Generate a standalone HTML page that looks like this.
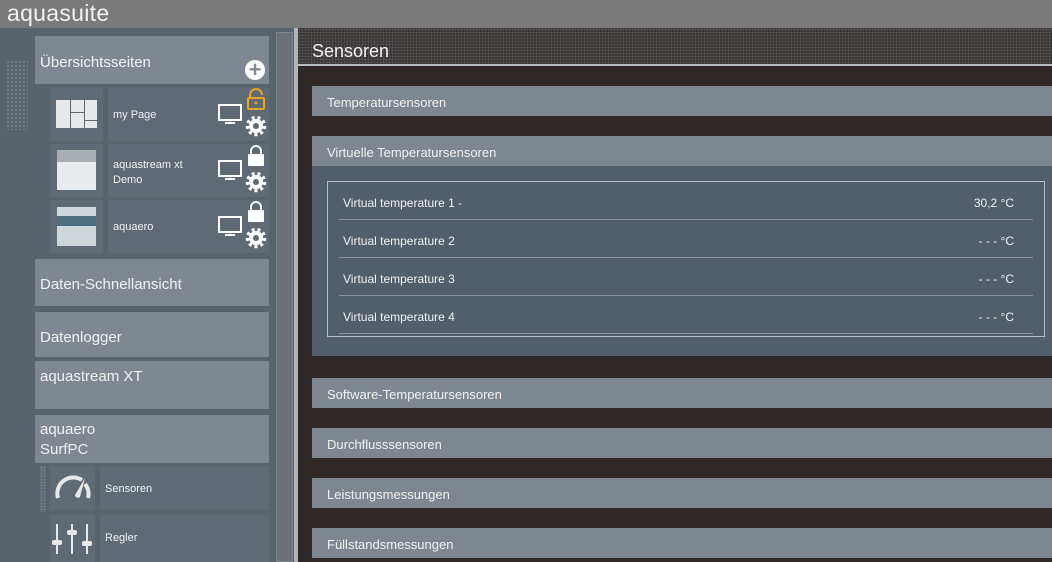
<!DOCTYPE html><html><head><style>
*{margin:0;padding:0;box-sizing:border-box}
body{width:1052px;height:562px;overflow:hidden;background:#2f2827;font-family:"Liberation Sans",sans-serif;color:#f2f2f2;position:relative}
.a{position:absolute}
.hd{background:#7f8891}
.it{background:#5f6a74}
.bar{position:absolute;left:312px;width:740px;height:30px;background:#7e868f;font-size:13px;line-height:33px;padding-left:15px}
.row{position:absolute;left:339px;width:694px;height:38px;border-bottom:1px solid #8b939b;font-size:12px;line-height:42px;padding-left:4px}
.row span{position:absolute;right:19px}
</style></head><body>
<div class="a" style="left:0;top:0;width:1052px;height:28px;background:#7a7a7a;font-size:23px;line-height:26px;padding-left:7px;letter-spacing:0.3px">aquasuite</div>
<div class="a" style="left:0;top:28px;width:294px;height:534px;background:#59636c"></div>
<div class="a" style="left:6px;top:60px;width:22px;height:70px;background-image:radial-gradient(#7c858e 1px,transparent 1.2px);background-size:4px 4px;opacity:.8"></div>
<div class="a" style="left:276px;top:32px;width:17px;height:530px;background:#6b7176;border:1px solid #7e858b"></div>
<div class="a" style="left:294px;top:28px;width:4px;height:534px;background:#aeb4b8"></div>
<div class="a hd" style="left:35px;top:36px;width:234px;height:48px;font-size:15px;padding:18px 0 0 5px">Übersichtsseiten</div>
<div class="a" style="left:245px;top:60px;width:20px;height:20px;border-radius:50%;background:#fff;color:#7f8891;font-size:22px;font-weight:bold;line-height:20px;text-align:center">+</div>

<div class="a it" style="left:50px;top:88px;width:53px;height:53px"></div>
<div class="a" style="left:56px;top:100px;width:14px;height:28px;background:#e8e9ea"></div>
<div class="a" style="left:71px;top:100px;width:13px;height:12px;background:#e8e9ea"></div>
<div class="a" style="left:71px;top:113px;width:13px;height:15px;background:#e8e9ea"></div>
<div class="a" style="left:85px;top:100px;width:12px;height:20px;background:#e8e9ea"></div>
<div class="a" style="left:85px;top:121px;width:12px;height:7px;background:#e8e9ea"></div>
<div class="a it" style="left:108px;top:88px;width:161px;height:53px;font-size:11px;padding:21px 0 0 5px">my Page</div>

<div class="a it" style="left:50px;top:144px;width:53px;height:53px"></div>
<div class="a" style="left:57px;top:150px;width:39px;height:40px;background:#e9ecee;border-top:12px solid #a9aeb2"></div>
<div class="a it" style="left:108px;top:144px;width:161px;height:53px;font-size:11px;padding:14px 0 0 5px;line-height:15px">aquastream xt<br>Demo</div>

<div class="a it" style="left:50px;top:200px;width:53px;height:53px"></div>
<div class="a" style="left:57px;top:207px;width:39px;height:39px;background:#cfd6da"></div>
<div class="a" style="left:57px;top:216px;width:39px;height:10px;background:#4c6e7e"></div>
<div class="a it" style="left:108px;top:200px;width:161px;height:53px;font-size:11px;padding:21px 0 0 5px">aquaero</div>

<svg class="a" style="left:216px;top:88px" width="54" height="166" viewBox="0 0 54 166">
<g fill="none" stroke="#fff" stroke-width="2">
<rect x="3" y="17" width="22" height="15"/><rect x="3" y="73" width="22" height="15"/><rect x="3" y="129" width="22" height="15"/>
<path d="M9 35h10M9 91h10M9 147h10"/>
<path d="M34 11v-4a6 6 0 0 1 12 0" stroke="#e5a526"/>
<path d="M35 67v-4a5 5 0 0 1 10 0v4M35 123v-4a5 5 0 0 1 10 0v4"/>
</g>
<rect x="32" y="10" width="16" height="11" rx="1" fill="none" stroke="#e5a526" stroke-width="2"/>
<circle cx="40" cy="15" r="1.5" fill="#e5a526"/>
<rect x="32" y="66" width="16" height="12" rx="1" fill="#fff"/><rect x="32" y="122" width="16" height="12" rx="1" fill="#fff"/>
<g fill="#fff"><circle cx="40" cy="38" r="7"/><circle cx="40" cy="94" r="7"/><circle cx="40" cy="150" r="7"/></g>
<g stroke="#fff" stroke-width="3.5" stroke-dasharray="3 2.9"><circle cx="40" cy="38" r="8.5" fill="none"/><circle cx="40" cy="94" r="8.5" fill="none"/><circle cx="40" cy="150" r="8.5" fill="none"/></g>
<g fill="#5f6a74"><circle cx="40" cy="38" r="3"/><circle cx="40" cy="94" r="3"/><circle cx="40" cy="150" r="3"/></g>
</svg>

<div class="a hd" style="left:35px;top:259px;width:234px;height:47px;font-size:15px;padding:17px 0 0 5px">Daten-Schnellansicht</div>
<div class="a hd" style="left:35px;top:312px;width:234px;height:45px;font-size:15px;padding:17px 0 0 5px">Datenlogger</div>
<div class="a hd" style="left:35px;top:361px;width:234px;height:48px;font-size:15px;padding:7px 0 0 5px">aquastream XT</div>
<div class="a hd" style="left:35px;top:415px;width:234px;height:48px;font-size:15px;padding:5px 0 0 5px;line-height:20px">aquaero<br>SurfPC</div>
<div class="a" style="left:40px;top:466px;width:6px;height:46px;background-image:radial-gradient(#7c858e 1px,transparent 1.2px);background-size:3px 3px"></div>
<div class="a it" style="left:50px;top:466px;width:45px;height:44px"></div>
<div class="a it" style="left:100px;top:466px;width:169px;height:44px;font-size:11px;padding:17px 0 0 5px">Sensoren</div>
<div class="a it" style="left:50px;top:515px;width:45px;height:47px"></div>
<div class="a it" style="left:100px;top:515px;width:169px;height:47px;font-size:11px;padding:17px 0 0 5px">Regler</div>
<svg class="a" style="left:50px;top:466px" width="45" height="96">
<path d="M8 32a16 16 0 0 1 24-18" fill="none" stroke="#e8e8e8" stroke-width="4"/>
<path d="M35 18a16 16 0 0 1 3 14" fill="none" stroke="#e8e8e8" stroke-width="4"/>
<path d="M35 12l-10 17a3 3 0 0 0 5 2z" fill="#e8e8e8"/>
<g stroke="#e8e8e8" stroke-width="2"><path d="M7 58v30M22 58v30M37 58v30"/></g>
<g fill="#e8e8e8"><rect x="2" y="74" width="10" height="5" rx="2"/><rect x="17" y="64" width="10" height="5" rx="2"/><rect x="32" y="75" width="10" height="5" rx="2"/></g>
</svg>

<div class="a" style="left:298px;top:28px;width:754px;height:36px;background:#3b3636;background-image:radial-gradient(#5a5555 0.8px,transparent 1px);background-size:3px 3px;font-size:18px;line-height:46px;padding-left:14px">Sensoren</div>
<div class="a" style="left:298px;top:64px;width:754px;height:2px;background:#b6bcc0"></div>

<div class="bar" style="top:86px">Temperatursensoren</div>
<div class="bar" style="top:136px">Virtuelle Temperatursensoren</div>
<div class="a" style="left:312px;top:166px;width:740px;height:190px;background:#525e69"></div>
<div class="a" style="left:327px;top:181px;width:718px;height:156px;border:1px solid #b8bec3"></div>
<div class="row" style="top:182px">Virtual temperature 1 -<span>30,2 °C</span></div>
<div class="row" style="top:220px">Virtual temperature 2<span>- - - °C</span></div>
<div class="row" style="top:258px">Virtual temperature 3<span>- - - °C</span></div>
<div class="row" style="top:296px">Virtual temperature 4<span>- - - °C</span></div>
<div class="bar" style="top:378px">Software-Temperatursensoren</div>
<div class="bar" style="top:428px">Durchflusssensoren</div>
<div class="bar" style="top:478px">Leistungsmessungen</div>
<div class="bar" style="top:528px">Füllstandsmessungen</div>
</body></html>
